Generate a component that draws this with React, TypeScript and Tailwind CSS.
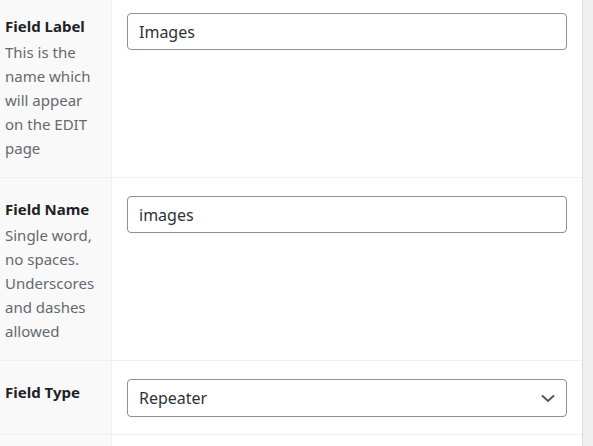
import React from "react";

function Chevron() {
  return (
    <svg width="16" height="16" viewBox="0 0 16 16" fill="none" className="shrink-0">
      <path d="M2 5.5 L8 11 L14 5.5" stroke="#50575e" strokeWidth="2" />
    </svg>
  );
}

function Row({
  title,
  desc,
  children,
  first,
}: {
  title: string;
  desc?: string[];
  children: React.ReactNode;
  first?: boolean;
}) {
  return (
    <div className="flex border-b border-[#f0f0f0]">
      <div
        className={`w-[112px] shrink-0 bg-[#f9f9f9] border-r border-[#f0f0f0] pl-[5px] pr-[4px] pb-[17px] ${
          first ? "pt-[14px]" : "pt-[19px]"
        }`}
      >
        <div className="text-[15px] leading-[24px] font-bold text-[#1d2327]">{title}</div>
        {desc && (
          <div className="mt-[2px] text-[15px] leading-[24px] text-[#646970]">
            {desc.map((l, i) => (
              <div key={i} className="whitespace-nowrap">{l}</div>
            ))}
          </div>
        )}
      </div>
      <div
        className={`flex-1 bg-white pl-[15px] pr-[15px] pb-[17px] ${
          first ? "pt-[13px]" : "pt-[18px]"
        }`}
      >
        {children}
      </div>
    </div>
  );
}

export default function App() {
  return (
    <div
      className="w-[593px] h-[446px] overflow-hidden flex bg-[#f0f0f1]"
      style={{ fontFamily: '"Noto Sans", "Open Sans", sans-serif' }}
    >
      <div className="w-[583px] shrink-0 border-r border-[#dcdcde] bg-white">
        <Row
          first
          title="Field Label"
          desc={["This is the", "name which", "will appear", "on the EDIT", "page"]}
        >
          <div className="h-[37px] rounded-[4px] border border-[#8c8f94] flex items-center px-[11px] text-[16px] text-[#2c3338]">
            Images
          </div>
        </Row>
        <Row
          title="Field Name"
          desc={["Single word,", "no spaces.", "Underscores", "and dashes", "allowed"]}
        >
          <div className="h-[37px] rounded-[4px] border border-[#8c8f94] flex items-center px-[11px] text-[16px] text-[#2c3338]">
            images
          </div>
        </Row>
        <Row title="Field Type">
          <div className="h-[38px] rounded-[4px] border border-[#8c8f94] flex items-center justify-between pl-[11px] pr-[10px] text-[16px] text-[#2c3338]">
            <span>Repeater</span>
            <Chevron />
          </div>
        </Row>
        <div className="flex h-[20px]">
          <div className="w-[112px] bg-[#f9f9f9] border-r border-[#f0f0f0]" />
          <div className="flex-1 bg-white" />
        </div>
      </div>
    </div>
  );
}
